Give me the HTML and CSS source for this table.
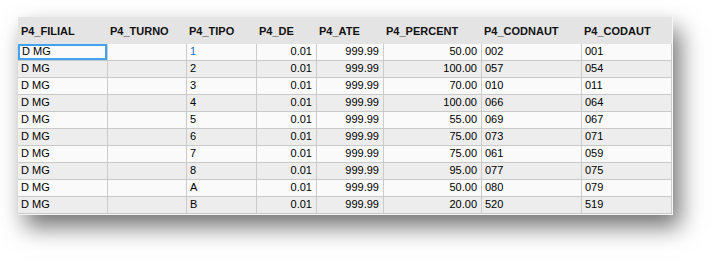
FILE: index.html
```html
<!DOCTYPE html>
<html>
<head>
<meta charset="utf-8">
<link rel="stylesheet" href="styles.css">
</head>
<body>
<div class="page">
<div class="sheet">
  <div class="row head">
    <div class="c">P4_FILIAL</div><div class="c">P4_TURNO</div><div class="c">P4_TIPO</div><div class="c">P4_DE</div><div class="c">P4_ATE</div><div class="c">P4_PERCENT</div><div class="c">P4_CODNAUT</div><div class="c">P4_CODAUT</div>
  </div>
  <div class="row odd">
    <div class="c focus">D MG</div><div class="c"></div><div class="c blue">1</div><div class="c num">0.01</div><div class="c num">999.99</div><div class="c num">50.00</div><div class="c">002</div><div class="c">001</div>
  </div>
  <div class="row even">
    <div class="c">D MG</div><div class="c"></div><div class="c">2</div><div class="c num">0.01</div><div class="c num">999.99</div><div class="c num">100.00</div><div class="c">057</div><div class="c">054</div>
  </div>
  <div class="row odd">
    <div class="c">D MG</div><div class="c"></div><div class="c">3</div><div class="c num">0.01</div><div class="c num">999.99</div><div class="c num">70.00</div><div class="c">010</div><div class="c">011</div>
  </div>
  <div class="row even">
    <div class="c">D MG</div><div class="c"></div><div class="c">4</div><div class="c num">0.01</div><div class="c num">999.99</div><div class="c num">100.00</div><div class="c">066</div><div class="c">064</div>
  </div>
  <div class="row odd">
    <div class="c">D MG</div><div class="c"></div><div class="c">5</div><div class="c num">0.01</div><div class="c num">999.99</div><div class="c num">55.00</div><div class="c">069</div><div class="c">067</div>
  </div>
  <div class="row even">
    <div class="c">D MG</div><div class="c"></div><div class="c">6</div><div class="c num">0.01</div><div class="c num">999.99</div><div class="c num">75.00</div><div class="c">073</div><div class="c">071</div>
  </div>
  <div class="row odd">
    <div class="c">D MG</div><div class="c"></div><div class="c">7</div><div class="c num">0.01</div><div class="c num">999.99</div><div class="c num">75.00</div><div class="c">061</div><div class="c">059</div>
  </div>
  <div class="row even">
    <div class="c">D MG</div><div class="c"></div><div class="c">8</div><div class="c num">0.01</div><div class="c num">999.99</div><div class="c num">95.00</div><div class="c">077</div><div class="c">075</div>
  </div>
  <div class="row odd">
    <div class="c">D MG</div><div class="c"></div><div class="c">A</div><div class="c num">0.01</div><div class="c num">999.99</div><div class="c num">50.00</div><div class="c">080</div><div class="c">079</div>
  </div>
  <div class="row even">
    <div class="c">D MG</div><div class="c"></div><div class="c">B</div><div class="c num">0.01</div><div class="c num">999.99</div><div class="c num">20.00</div><div class="c">520</div><div class="c">519</div>
  </div>
</div>
</div>
</body>
</html>
```
FILE: styles.css
```css
html, body {
  margin: 0;
  padding: 0;
  background: #ffffff;
}
body {
  font-family: "Liberation Sans", Arial, sans-serif;
  font-size: 11px;
  color: #000000;
}
.page {
  height: 263px;
  padding: 17px 0 0 18px;
  box-sizing: border-box;
}
.sheet {
  width: 655px;
  box-sizing: border-box;
  background: #f7f7f7;
  border-right: 1px solid #f7f7f7;
  border-bottom: 1px solid #f4f4f4;
  box-shadow: 7px 12px 22px rgba(0, 0, 0, 0.55);
}
.row {
  display: grid;
  grid-template-columns: 89px 79px 70px 60px 67px 98px 100px 91px;
  height: 17px;
  box-sizing: border-box;
  border-bottom: 1px solid #c9c9c9;
}
.row.head {
  height: 27px;
  background: #e4e4e4;
  border-bottom: none;
  font-weight: bold;
}
.row.odd { background: #fafafa; }
.row.even { background: #ededed; }
.c {
  padding: 0 3px;
  line-height: 14px;
  white-space: nowrap;
  overflow: hidden;
  box-sizing: border-box;
}
.row:not(.head) .c + .c {
  border-left: 1px solid #cbcbcb;
}
.row:not(.head) .c:last-child {
  border-right: 1px solid #cbcbcb;
}
.head .c {
  line-height: 27px;
  padding-top: 1px;
  padding-left: 3px;
  color: #111111;
}
.num {
  text-align: right;
  padding-right: 4px;
}
.blue { color: #1c6fc2; }
.focus {
  outline: 2px solid #41a2f2;
  outline-offset: -2px;
  padding-left: 4px;
}
```
